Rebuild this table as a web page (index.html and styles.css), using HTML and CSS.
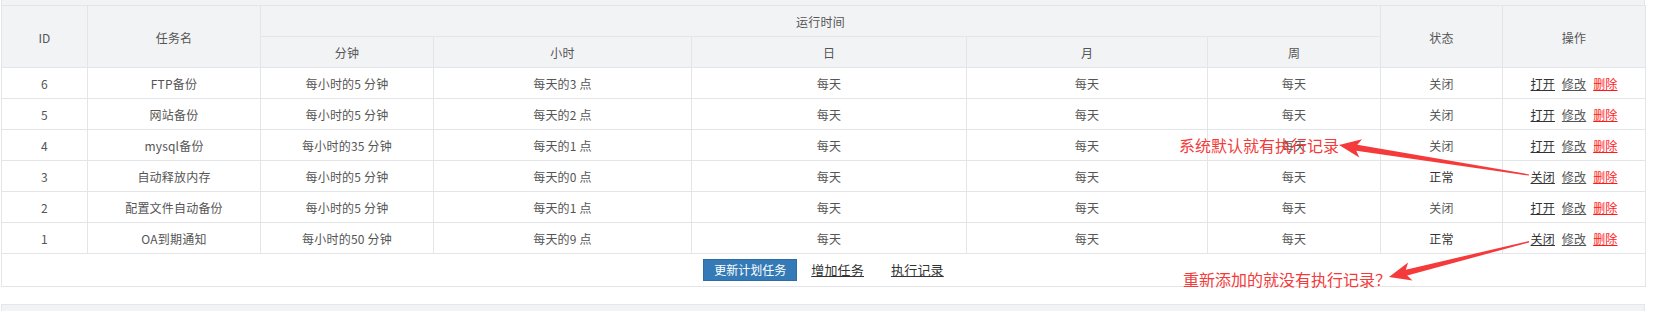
FILE: index.html
```html
<!DOCTYPE html>
<html lang="zh-CN">
<head>
<meta charset="utf-8">
<title>计划任务</title>
<link rel="stylesheet" href="styles.css">
</head>
<body>
<div class="page">
  <div class="top-strip"></div>
  <table class="tasks">
    <colgroup>
      <col class="c-id"><col class="c-name"><col class="c-min"><col class="c-hour"><col class="c-day"><col class="c-month"><col class="c-week"><col class="c-state"><col class="c-op">
    </colgroup>
    <thead>
      <tr class="h1">
        <th rowspan="2">ID</th>
        <th rowspan="2">任务名</th>
        <th colspan="5">运行时间</th>
        <th rowspan="2">状态</th>
        <th rowspan="2">操作</th>
      </tr>
      <tr class="h2">
        <th>分钟</th><th>小时</th><th>日</th><th>月</th><th>周</th>
      </tr>
    </thead>
    <tbody>
      <tr><td>6</td><td>FTP备份</td><td>每小时的5 分钟</td><td>每天的3 点</td><td>每天</td><td>每天</td><td>每天</td><td>关闭</td><td class="ops"><a class="op">打开</a> <a class="op edit">修改</a> <a class="op del">删除</a></td></tr>
      <tr><td>5</td><td>网站备份</td><td>每小时的5 分钟</td><td>每天的2 点</td><td>每天</td><td>每天</td><td>每天</td><td>关闭</td><td class="ops"><a class="op">打开</a> <a class="op edit">修改</a> <a class="op del">删除</a></td></tr>
      <tr><td>4</td><td>mysql备份</td><td>每小时的35 分钟</td><td>每天的1 点</td><td>每天</td><td>每天</td><td>每天</td><td>关闭</td><td class="ops"><a class="op">打开</a> <a class="op edit">修改</a> <a class="op del">删除</a></td></tr>
      <tr><td>3</td><td>自动释放内存</td><td>每小时的5 分钟</td><td>每天的0 点</td><td>每天</td><td>每天</td><td>每天</td><td class="ok">正常</td><td class="ops"><a class="op">关闭</a> <a class="op edit">修改</a> <a class="op del">删除</a></td></tr>
      <tr><td>2</td><td>配置文件自动备份</td><td>每小时的5 分钟</td><td>每天的1 点</td><td>每天</td><td>每天</td><td>每天</td><td>关闭</td><td class="ops"><a class="op">打开</a> <a class="op edit">修改</a> <a class="op del">删除</a></td></tr>
      <tr><td>1</td><td>OA到期通知</td><td>每小时的50 分钟</td><td>每天的9 点</td><td>每天</td><td>每天</td><td>每天</td><td class="ok">正常</td><td class="ops"><a class="op">关闭</a> <a class="op edit">修改</a> <a class="op del">删除</a></td></tr>
    </tbody>
    <tfoot>
      <tr><td colspan="9">
        <div class="actions">
          <button class="btn-primary">更新计划任务</button>
          <a class="link">增加任务</a>
          <a class="link">执行记录</a>
        </div>
      </td></tr>
    </tfoot>
  </table>
  <div class="bottom-panel"></div>
</div>

<div class="note note-1">系统默认就有执行记录</div>
<div class="note note-2">重新添加的就没有执行记录？</div>
<svg class="arrows" width="1661" height="311" viewBox="0 0 1661 311">
  <polygon points="1339,145 1362.1,139.2 1357.3,144.8 1529.1,174.4 1528.9,175.6 1356.3,150.8 1359.3,157.6" />
  <polygon points="1389,277 1408.1,262.6 1405.8,269.7 1528.9,241.0 1529.1,242.4 1407.2,275.5 1412.5,280.6" />
</svg>
</body>
</html>
```

FILE: styles.css
```css
html, body {
  margin: 0;
  padding: 0;
  background: #ffffff;
}

body {
  font-family: "Noto Sans CJK SC", "Noto Sans", sans-serif;
  font-size: 12px;
  color: #555;
  position: relative;
  width: 1661px;
  height: 311px;
  overflow: hidden;
}

.page {
  padding-left: 1px;
  width: 1644px;
}

.top-strip {
  height: 5px;
  background: #f2f3f5;
  box-sizing: border-box;
  border-left: 1px solid #e4e6ea;
  border-right: 1px solid #e4e6ea;
  margin-left: -0.5px;
}

.tasks {
  width: 1644px;
  border-collapse: collapse;
  table-layout: fixed;
}

.c-id { width: 86px; }
.c-name { width: 173px; }
.c-min { width: 173px; }
.c-hour { width: 258px; }
.c-day { width: 275px; }
.c-month { width: 241px; }
.c-week { width: 173px; }
.c-state { width: 122px; }
.c-op { width: 143px; }

.tasks th,
.tasks td {
  border: 1px solid #e3e5e9;
  padding: 0;
  text-align: center;
  font-weight: normal;
  line-height: 16px;
  letter-spacing: 0.2px;
}

.tasks th {
  background: #f2f3f5;
  color: #555;
  height: 28px;
  padding-top: 2px;
}

.tasks tbody td {
  height: 29px;
  padding-top: 1px;
  color: #555;
}

.tasks td.ok {
  color: #333;
}

.op {
  color: #333;
  text-decoration: underline;
  cursor: pointer;
  margin: 0 2px;
}

.op.edit {
  color: #555;
}

.op.del {
  color: #ff1a1a;
}

.tasks tfoot td {
  height: 32px;
}

.actions {
  display: flex;
  justify-content: center;
  align-items: center;
  gap: 14px;
}

.btn-primary {
  font-family: inherit;
  font-size: 12px;
  color: #fff;
  background: #337ab7;
  border: 1px solid #2e6da4;
  height: 22px;
  width: 94px;
  padding: 0;
  line-height: 18px;
  border-radius: 0;
}

.link {
  font-size: 13px;
  color: #333;
  text-decoration: underline;
  cursor: pointer;
}

.link + .link {
  margin-left: 13px;
}

.bottom-panel {
  margin-top: 17px;
  height: 20px;
  background: #f2f3f5;
  border: 1px solid #e4e6ea;
  box-sizing: border-box;
  margin-left: -0.5px;
}

.note {
  position: absolute;
  font-size: 16px;
  line-height: 20px;
  color: #f43a3a;
  white-space: nowrap;
}

.note-1 {
  left: 1179px;
  top: 135px;
}

.note-2 {
  left: 1183px;
  top: 269px;
}

.arrows {
  position: absolute;
  left: 0;
  top: 0;
  pointer-events: none;
  fill: #f43a3a;
}
```
